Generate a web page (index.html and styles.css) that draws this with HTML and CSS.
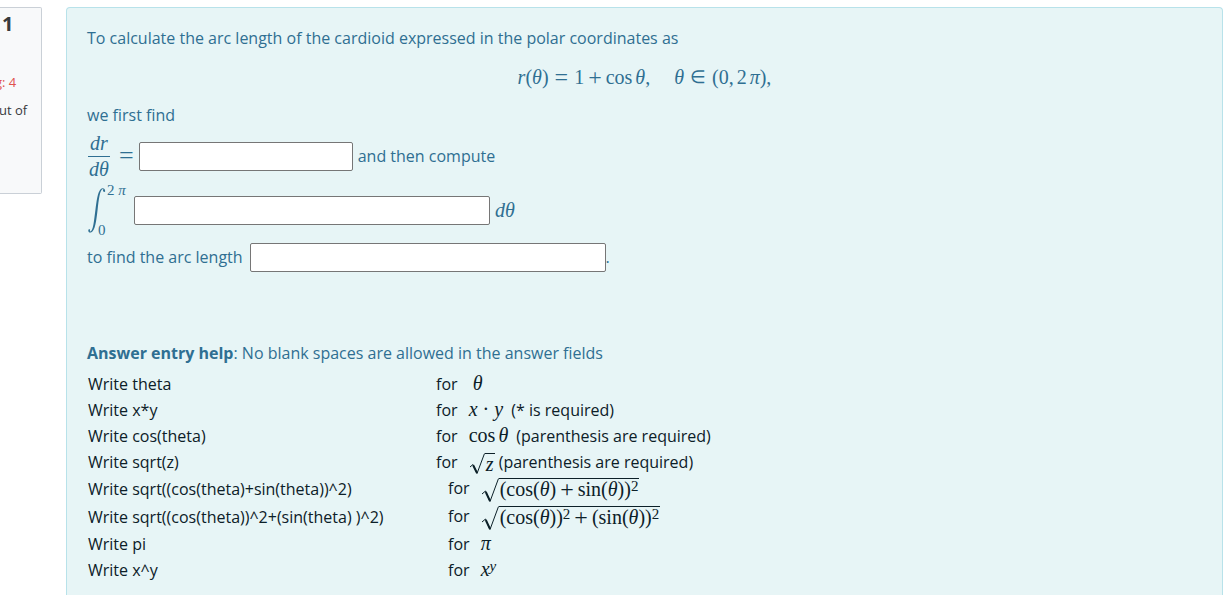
FILE: index.html
```html
<!DOCTYPE html>
<html lang="en">
<head>
<meta charset="utf-8">
<title>Arc length of the cardioid</title>
<link rel="stylesheet" href="styles.css">
</head>
<body>
<div class="page">
  <aside class="info">
    <h3 class="number">1</h3>
    <div class="state">g: 4</div>
    <div class="grade">ut of</div>
  </aside>
  <main class="formulation">
    <p class="line">To calculate the arc length of the cardioid expressed in the polar coordinates as</p>
    <div class="display math"><span><i>r</i>(<i>θ</i>)</span><span class="rel sign">=</span><span>1</span><span class="bin sign">+</span><span class="op">cos</span><i>θ</i>,<span class="quad"></span><i>θ</i><span class="rel in">∈</span><span>(0,</span><span class="thin">2</span><i class="thin">π</i><span>),</span></div>
    <p class="line">we first find</p>
    <div class="row derivative">
      <span class="math frac"><i class="num">dr</i><i class="den">dθ</i></span>
      <span class="math equals">=</span>
      <input class="answer short" type="text" id="derivative" aria-label="Derivative of r">
      <label class="after" for="derivative">and then compute</label>
    </div>
    <div class="row integral">
      <span class="math int">
        <svg class="int-sign" viewBox="0 0 18 46" aria-hidden="true"><path d="M17.2 4.2C17.2 1.2 14.5.2 12.6 2.2C9.6 5.3 8.6 14 7.4 23C6 33.5 5.2 44.5 2.2 44.5C1.7 44.5 1.8 44 2.1 43.3C2.5 42 .5 41.6.3 43.2C.1 45 1.5 45.8 3 45.4C7.3 44.2 8.3 33 9.6 22.7C10.8 12.8 11.8 2.2 15 2C15.7 2 15.1 2.5 15 3.3C14.9 5 16.8 5.6 17.2 4.2Z"/></svg>
        <span class="limits"><span>2&nbsp;<i>π</i></span><span class="lower">0</span></span>
      </span>
      <input class="answer long" type="text" id="integrand" aria-label="Integrand">
      <label class="math after" for="integrand"><i>dθ</i></label>
    </div>
    <div class="row total">
      <label for="length">to find the arc length</label>
      <input class="answer long" type="text" id="length"><span>.</span>
    </div>
    <p class="line help"><strong>Answer entry help</strong>: No blank spaces are allowed in the answer fields</p>
    <table class="syntax">
      <tr><td>Write theta</td><td>for <span class="math m wide"><i>θ</i></span></td></tr>
      <tr><td>Write x*y</td><td>for <span class="math m"><i>x</i><span class="bin dot">·</span><i>y</i></span> <span class="note">(* is required)</span></td></tr>
      <tr><td>Write cos(theta)</td><td>for <span class="math m"><span class="op">cos</span><i>θ</i></span> <span class="note">(parenthesis are required)</span></td></tr>
      <tr><td>Write sqrt(z)</td><td>for <span class="math m root"><svg class="radical" viewBox="0 0 16 22" preserveAspectRatio="none" aria-hidden="true"><path d="M1 14L4 11.5L8 20.5L15.5 .5"/><path class="heavy" d="M4.2 12.3L8 20"/></svg><span class="radicand"><i>z</i></span></span> (parenthesis are required)</td></tr>
    </table>
    <table class="syntax powers">
      <tr class="tall"><td>Write sqrt((cos(theta)+sin(theta))^2)</td><td>for <span class="math m root"><svg class="radical big" viewBox="0 0 18 25" preserveAspectRatio="none" aria-hidden="true"><path d="M1 16L4.5 13L9 23.5L17.5 .5"/><path class="heavy" d="M4.8 14L9 23"/></svg><span class="radicand">(cos(<i>θ</i>)<span class="bin sign">+</span>sin(<i>θ</i>))<sup>2</sup></span></span></td></tr>
      <tr class="tall"><td>Write sqrt((cos(theta))^2+(sin(theta) )^2)</td><td>for <span class="math m root"><svg class="radical big" viewBox="0 0 18 25" preserveAspectRatio="none" aria-hidden="true"><path d="M1 16L4.5 13L9 23.5L17.5 .5"/><path class="heavy" d="M4.8 14L9 23"/></svg><span class="radicand">(cos(<i>θ</i>))<sup>2</sup><span class="bin sign">+</span>(sin(<i>θ</i>))<sup>2</sup></span></span></td></tr>
      <tr><td>Write pi</td><td>for <span class="math m"><i>π</i></span></td></tr>
      <tr><td>Write x^y</td><td>for <span class="math m"><i>x</i><sup><i>y</i></sup></span></td></tr>
    </table>
  </main>
</div>
</body>
</html>
```
FILE: styles.css
```css
* { box-sizing: border-box; }
body {
  margin: 0;
  background: #fff;
  color: #2f6f92;
  font: 16px/26px "Open Sans", "Noto Sans", sans-serif;
}
.page {
  display: flex;
  align-items: flex-start;
  gap: 24px;
  height: 100vh;
  overflow: hidden;
  padding: 7px 3px 0 0;
}
.info {
  flex: 0 0 42px;
  height: 187px;
  overflow: hidden;
  border: 1px solid #cad0d7;
  border-left: 0;
  border-radius: 0 2px 2px 0;
  background: #f8f9fa;
  color: #373a3c;
  font-size: 13px;
  line-height: 28px;
  white-space: nowrap;
}
.number { margin: 2px 0 30px 2px; font-size: 20px; line-height: 28px; }
.state { margin-left: -5px; color: #e0524d; }
.grade { margin-left: -1px; }
.formulation {
  flex: 1;
  min-width: 0;
  min-height: 100%;
  padding: 17px 20px 20px;
  border: 1px solid #b8e2ea;
  border-bottom: 0;
  border-radius: 4px 4px 0 0;
  background: #e7f5f6;
}
.line { margin: 0; }
.math { font-family: "Liberation Serif", serif; font-size: 20px; white-space: nowrap; }
.math i { font-style: italic; }
.display {
  display: flex;
  justify-content: center;
  margin: 13px 0 12px;
}
.sign { font-size: 24px; line-height: 20px; vertical-align: -1px; }
.display .sign { line-height: 26px; }
.rel { margin: 0 6px; }
.in { font-size: 18px; }
.bin { margin: 0 4px; }
.dot { margin: 0 5px; }
.op { margin-right: 3px; }
.thin { margin-left: 3px; }
.quad { width: 24px; }
.row { display: flex; align-items: center; }
.derivative { height: 56px; }
.frac {
  display: inline-flex;
  flex-direction: column;
  width: 22px;
  margin-left: 1px;
  line-height: 25px;
  text-align: center;
}
.num { border-bottom: 1px solid; }
.equals { margin: 0 5px 0 9px; font-size: 26px; }
.answer {
  height: 29px;
  padding: 2px 4px;
  border: 1px solid #767676;
  border-radius: 2px;
  background: #fff;
  font: inherit;
}
.short { width: 214px; }
.long { width: 356px; }
.after { margin-left: 5px; }
.integral { height: 52px; }
.int { display: flex; align-items: center; width: 47px; padding-left: 1px; }
.int-sign { width: 18px; height: 46px; fill: currentColor; }
.limits {
  display: flex;
  flex-direction: column;
  justify-content: space-between;
  height: 54px;
  padding-left: 1px;
  font-size: 15px;
  line-height: 14px;
}
.lower { margin-left: -9px; }
.total { height: 42px; gap: 7px; }
.total span { margin-left: -7px; }
.help { margin-top: 62px; }
.syntax { margin-top: 5px; border-collapse: collapse; color: #0c2028; }
.syntax td { height: 26px; padding: 0 0 0 1px; line-height: 26px; white-space: nowrap; }
.syntax td:first-child { width: 348px; }
.powers { margin-top: 0; }
.powers td:first-child { width: 360px; }
.syntax .tall td { height: 28px; }
.m { display: inline-block; margin-left: 7px; line-height: 20px; }
.wide { margin-left: 11px; }
.note { margin-left: 4px; }
.root { display: inline-flex; vertical-align: middle; }
.radical { width: 16px; height: 22px; fill: none; stroke: currentColor; }
.big { width: 18px; height: 25px; }
.heavy { stroke-width: 2; }
.radicand { padding: 0 1px; border-top: 1px solid; }
.math sup { font-size: 15px; line-height: 0; vertical-align: 5px; }
```
